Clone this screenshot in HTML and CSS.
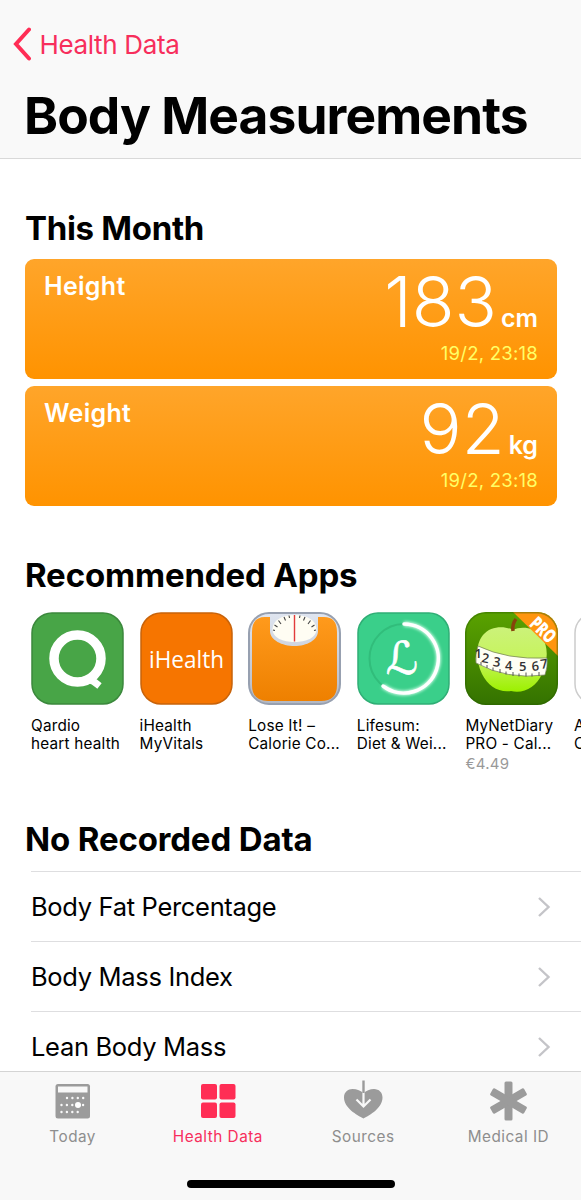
FILE: index.html
```html
<!DOCTYPE html>
<html lang="en">
<head>
  <meta charset="UTF-8">
  <meta name="viewport" content="width=device-width, initial-scale=1">
  <title>Body Measurements</title>
  <link rel="stylesheet" href="styles.css">
</head>
<body>

  <div class="screen">
    <!-- Navigation bar -->
    <header class="navbar">
      <a class="back" href="#">
        <svg width="18" height="34" viewBox="0 0 18 34"><path d="M16 2.5 3 17 16 31.500" /></svg>
        <span>Health Data</span>
      </a>
      <h1>Body Measurements</h1>
    </header>

    <main class="content">
      <!-- This month -->
      <section>
        <h2 class="this-month">This Month</h2>
        <div class="cards">
          <div class="card">
            <span class="card-label">Height</span>
            <div class="card-data">
              <div class="reading"><span class="value">183</span><span class="unit">cm</span></div>
              <div class="date">19/2, 23:18</div>
            </div>
          </div>
          <div class="card">
            <span class="card-label">Weight</span>
            <div class="card-data">
              <div class="reading"><span class="value">92</span><span class="unit">kg</span></div>
              <div class="date">19/2, 23:18</div>
            </div>
          </div>
        </div>
      </section>

      <!-- Recommended apps -->
      <section class="recommended">
        <h2>Recommended Apps</h2>
        <div class="apps">
          <div class="app">
            <svg class="app-icon" viewBox="0 0 93 93">
              <rect x="1" y="1" width="91" height="91" rx="20" fill="#48a547" stroke="#3b883c" stroke-width="1.500" />
              <circle cx="46.500" cy="46.500" r="23.500" fill="none" stroke="#fff" stroke-width="9.500" />
              <path d="M46 70.500C60 65 62 69 68.500 74" fill="none" stroke="#fff" stroke-width="7" />
            </svg>
            <div class="app-name">Qardio<br>heart health</div>
          </div>
          <div class="app">
            <svg class="app-icon" viewBox="0 0 93 93">
              <rect x="1" y="1" width="91" height="91" rx="20" fill="#f67500" stroke="#c8630a" stroke-width="1.500" />
              <text class="ihealth" x="9" y="56" textLength="75" lengthAdjust="spacingAndGlyphs">iHealth</text>
            </svg>
            <div class="app-name">iHealth<br>MyVitals</div>
          </div>
          <div class="app">
            <svg class="app-icon" viewBox="0 0 93 93">
              <defs>
                <linearGradient id="scale" x1="0" y1="0" x2="0" y2="1">
                  <stop offset="0" stop-color="#ff9a1c" />
                  <stop offset="1" stop-color="#ee8000" />
                </linearGradient>
                <linearGradient id="rim" x1="0" y1="0" x2="0" y2="1">
                  <stop offset="0" stop-color="#dfe5f0" />
                  <stop offset="1" stop-color="#b4b8c2" />
                </linearGradient>
              </defs>
              <rect x="1" y="1" width="91" height="91" rx="20" fill="url(#rim)" stroke="#97a0b0" stroke-width="2" />
              <path d="M4 20Q4 5 17 5H22V19C22 28 34 34 46.500 34S70 28 70 19V5H76Q89 5 89 20V73Q89 89 73 89H20Q4 89 4 73Z" fill="url(#scale)" />
              <path d="M24.500 17C25 8 34 3 46.500 3S68 8 68.500 17C68.500 26 58 30 46.500 30S24.500 26 24.500 17Z" fill="#fffdf3" />
              <path d="M25 18l2 .500M26.500 13l3 2M30.500 8.500l2.500 3.500M36 5l1.500 3.500M41 3.500l.500 2.500M52 3.500l-.500 2.500M57 5l-1.500 3.500M62.500 8.500l-2.500 3.500M66.500 13l-3 2M68 18l-2 .500" stroke="#444" stroke-width="1.100" />
              <path d="M46.500 3V29.500" stroke="#e23b3b" stroke-width="1.400" />
            </svg>
            <div class="app-name">Lose It! –<br>Calorie Co...</div>
          </div>
          <div class="app">
            <svg class="app-icon" viewBox="0 0 93 93">
              <defs>
                <filter id="glow" x="-20%" y="-20%" width="140%" height="140%"><feGaussianBlur stdDeviation="1.800" /></filter>
              </defs>
              <rect x="1" y="1" width="91" height="91" rx="20" fill="#3acf8a" stroke="#2fae75" stroke-width="1.500" />
              <circle cx="47" cy="46.500" r="34.500" fill="none" stroke="#31bd7b" stroke-width="2" />
              <path d="M47 12A34.500 34.500 0 1 1 26 74" fill="none" stroke="#d9ffec" stroke-width="5" filter="url(#glow)" />
              <path d="M47 12A34.500 34.500 0 1 1 26 74" fill="none" stroke="#fff" stroke-width="3.500" stroke-linecap="round" />
              <text class="lifesum" x="45" y="62" text-anchor="middle">ℒ</text>
            </svg>
            <div class="app-name">Lifesum:<br>Diet &amp; Wei...</div>
          </div>
          <div class="app">
            <svg class="app-icon" viewBox="0 0 93 93">
              <defs>
                <linearGradient id="leaf" x1="0" y1="0" x2="0" y2="1">
                  <stop offset="0" stop-color="#5aa200" />
                  <stop offset="1" stop-color="#347200" />
                </linearGradient>
                <linearGradient id="apple" x1="0" y1="0" x2="0" y2="1">
                  <stop offset="0" stop-color="#ccf27a" />
                  <stop offset="0.500" stop-color="#c6f45c" />
                  <stop offset="1" stop-color="#9cf000" />
                </linearGradient>
                <clipPath id="tile"><rect width="93" height="93" rx="21" /></clipPath>
              </defs>
              <g clip-path="url(#tile)">
                <rect width="93" height="93" fill="url(#leaf)" />
                <path d="M48 18C41 14 26 13 18 23C10 33 11 49 17 62C23 74 34 81 46 79C59 82 71 75 77 62C83 49 84 34 76 24C69 15 56 14 48 18Z" fill="url(#apple)" />
                <path d="M48 19Q47 12 51 7" fill="none" stroke="#87430c" stroke-width="3.500" />
                <path d="M13 34Q42 48 82 46Q83 55 80 63Q42 68 11 51Q10 42 13 34Z" fill="#fffff4" stroke="#6d7950" stroke-width="0.700" />
                <path d="M16 53v-3M22 56v-3M28 58.500v-3M35 61v-4M41 62.500v-3M48 64v-4M54 64.500v-3M61 64.500v-4M67 64.500v-3M74 64v-4" stroke="#555" stroke-width="1" />
                <g class="tape">
                  <text x="9.500" y="46">1</text>
                  <text x="16" y="50" transform="rotate(10 16 50)">2</text>
                  <text x="27.500" y="54" transform="rotate(8 27.500 54)">3</text>
                  <text x="40" y="58">4</text>
                  <text x="54" y="59">5</text>
                  <text x="67" y="59" transform="rotate(-5 67 59)">6</text>
                  <text x="76" y="57" transform="rotate(-8 76 57)">7</text>
                </g>
                <path d="M48 0H93V44Z" fill="#ff950f" />
                <text class="pro" transform="translate(63.500 13) rotate(44)" textLength="28" lengthAdjust="spacingAndGlyphs">PRO</text>
                <rect x="0.700" y="0.700" width="91.600" height="91.600" rx="20.500" fill="none" stroke="#285c00" stroke-opacity="0.400" stroke-width="1.500" />
              </g>
            </svg>
            <div class="app-name">MyNetDiary<br>PRO - Cal...</div>
            <div class="price">€4.49</div>
          </div>
          <div class="app">
            <svg class="app-icon" viewBox="0 0 93 93">
              <rect x="1" y="1" width="91" height="91" rx="20" fill="#fff" stroke="#ccc" stroke-width="1.500" />
            </svg>
            <div class="app-name">A<br>C</div>
          </div>
        </div>
      </section>

      <!-- No recorded data -->
      <section class="no-data">
        <h2>No Recorded Data</h2>
        <ul class="list">
          <li><span>Body Fat Percentage</span><svg width="14" height="22" viewBox="0 0 14 22"><path d="M2 2 11.500 11 2 20" /></svg></li>
          <li><span>Body Mass Index</span><svg width="14" height="22" viewBox="0 0 14 22"><path d="M2 2 11.500 11 2 20" /></svg></li>
          <li><span>Lean Body Mass</span><svg width="14" height="22" viewBox="0 0 14 22"><path d="M2 2 11.500 11 2 20" /></svg></li>
        </ul>
      </section>
    </main>

    <!-- Tab bar -->
    <footer class="footer">
      <nav class="tabs">
        <a class="tab" href="#">
          <svg width="40" height="42" viewBox="0 0 40 42">
            <rect x="2.500" y="4" width="34.500" height="34.500" rx="2.500" fill="#9b9b9b" />
            <rect x="5" y="6.500" width="29.500" height="6" fill="#f8f8f8" />
            <path d="M14 18h16.500M8.500 25h22M8.500 32h16.500" stroke="#f8f8f8" stroke-width="2.400" stroke-linecap="round" stroke-dasharray="0 5.400" />
            <circle cx="25" cy="25" r="3" fill="#fff" />
          </svg>
          <span>Today</span>
        </a>
        <a class="tab active" href="#">
          <svg width="40" height="42" viewBox="0 0 40 42" fill="#ff2d55">
            <rect x="3" y="4" width="16" height="15.500" rx="2" />
            <rect x="21.500" y="4" width="16" height="15.500" rx="2" />
            <rect x="3" y="22.500" width="16" height="15.500" rx="2" />
            <rect x="21.500" y="22.500" width="16" height="15.500" rx="2" />
          </svg>
          <span>Health Data</span>
        </a>
        <a class="tab" href="#">
          <svg width="40" height="42" viewBox="0 0 40 42">
            <path d="M20.500 38.500C14 35 1 28 1 17.500C1 12 5 9 9.500 9C14 9 18 10.500 20.500 13.500C23 10.500 27 9 31 9C36 9 39.500 12.500 39.500 17.500C39.500 28 27 35 20.500 38.500Z" fill="#9b9b9b" />
            <path d="M20.500 12V27M13.500 19.500 20.500 26.500 27.500 19.500" fill="none" stroke="#f8f8f8" stroke-width="2.200" />
            <path d="M20.500 0.500V13" stroke="#9b9b9b" stroke-width="2.400" />
          </svg>
          <span>Sources</span>
        </a>
        <a class="tab" href="#">
          <svg width="40" height="42" viewBox="0 0 40 42" fill="#9b9b9b">
            <rect x="16.500" y="1.500" width="8" height="39" rx="1.500" />
            <rect x="16.500" y="1.500" width="8" height="39" rx="1.500" transform="rotate(60 20.500 21)" />
            <rect x="16.500" y="1.500" width="8" height="39" rx="1.500" transform="rotate(-60 20.500 21)" />
          </svg>
          <span>Medical ID</span>
        </a>
      </nav>
      <div class="home-indicator"></div>
    </footer>
  </div>

</body>
</html>
```
FILE: styles.css
```css
* {
  box-sizing: border-box;
}

body {
  margin: 0;
  background: #fff;
  color: #000;
  font-family: Inter, "Liberation Sans", sans-serif;
}

a {
  color: inherit;
  text-decoration: none;
}

svg {
  display: block;
  flex: none;
}

.screen {
  display: flex;
  flex-direction: column;
  width: 581px;
  height: 1200px;
  overflow: hidden;
}

/* Navigation bar */
.navbar {
  flex: none;
  height: 159px;
  background: #f9f9f9;
  border-bottom: 1px solid #d9d9d9;
}

.back {
  display: flex;
  align-items: center;
  gap: 8.5px;
  height: 88px;
  padding-left: 13px;
  color: #f72e5c;
  font-size: 26px;
  letter-spacing: -0.35px;
}

.back path {
  fill: none;
  stroke: #ff2d55;
  stroke-width: 4;
  stroke-linecap: round;
}

h1 {
  margin: -1px 0 0;
  padding-left: 24px;
  font-size: 51.5px;
  line-height: 57px;
  font-weight: 700;
  letter-spacing: -0.92px;
  white-space: nowrap;
}

h2 {
  margin: 0;
  padding-left: 25px;
  font-size: 33px;
  line-height: 40px;
  font-weight: 700;
  letter-spacing: -0.15px;
  white-space: nowrap;
}

.this-month {
  margin-top: -1px;
  padding-bottom: 1px;
  letter-spacing: -0.3px;
}

.content {
  flex: 1;
  min-height: 0;
  padding-top: 50px;
  overflow: hidden;
}

/* Measurement cards */
.cards {
  display: flex;
  flex-direction: column;
  gap: 6.5px;
  padding: 9.5px 24px 0 25px;
}

.card {
  display: flex;
  justify-content: space-between;
  height: 120.5px;
  padding: 8px 19px 0;
  border-radius: 9px;
  background: linear-gradient(#ffa52a, #ff9300);
  color: #fff;
}

.card-label {
  font-size: 25px;
  line-height: 39px;
  font-weight: 600;
  letter-spacing: 0.3px;
}

.card-data {
  text-align: right;
}

.reading {
  display: flex;
  align-items: baseline;
  justify-content: flex-end;
  gap: 4px;
  height: 70px;
  line-height: 69px;
}

.value {
  font-size: 70px;
  font-weight: 300;
}

.unit {
  font-size: 25px;
  font-weight: 600;
}

.date {
  margin-top: 6px;
  color: #ffff66;
  font-size: 18.5px;
  line-height: 20px;
  letter-spacing: 0.25px;
}

/* Recommended apps */
.recommended {
  padding-top: 49px;
}

.apps {
  display: flex;
  gap: 15.6px;
  height: 208px;
  padding: 17px 0 0 31px;
}

.app {
  flex: none;
  width: 93px;
  font-size: 15.3px;
  white-space: nowrap;
}

.app-icon {
  width: 93px;
  height: 93px;
}

.app-name {
  margin-top: 11.5px;
  line-height: 18px;
  letter-spacing: 0.2px;
}

.price {
  margin-top: 1px;
  color: #999;
  font-size: 15px;
  line-height: 20px;
  letter-spacing: 0.3px;
}

.ihealth {
  fill: #fff;
  font-family: "Open Sans", sans-serif;
  font-size: 24px;
}

.lifesum {
  fill: #fff;
  stroke: #fff;
  stroke-width: 0.6px;
  font-family: "DejaVu Sans", sans-serif;
  font-size: 45px;
}

.tape {
  fill: #333;
  font-family: "Open Sans", sans-serif;
  font-size: 13px;
  font-weight: 600;
}

.pro {
  fill: #fff;
  font-family: "Open Sans", sans-serif;
  font-size: 19px;
  font-weight: 800;
}

/* No recorded data */
.no-data {
  padding-top: 16px;
}

.list {
  margin: 12px 0 0;
  padding: 0 0 0 31px;
  list-style: none;
}

.list li {
  display: flex;
  align-items: center;
  justify-content: space-between;
  height: 70px;
  padding-right: 30px;
  border-top: 1px solid #dedee0;
  font-size: 25.5px;
  letter-spacing: -0.32px;
}

.list path {
  fill: none;
  stroke: #c4c4c8;
  stroke-width: 2.4;
}

/* Tab bar */
.footer {
  flex: none;
  height: 129px;
  border-top: 1px solid #d4d4d4;
  background: #f8f8f8;
}

.tabs {
  display: grid;
  grid-template-columns: repeat(4, 1fr);
  height: 108px;
  padding-top: 8px;
}

.tab {
  display: flex;
  flex-direction: column;
  align-items: center;
  gap: 5px;
  color: #8e8e8e;
  font-size: 15.3px;
  line-height: 20px;
  letter-spacing: 0.5px;
}

.active {
  color: #f72e5c;
}

.home-indicator {
  width: 208px;
  height: 8px;
  margin: 0 auto;
  border-radius: 4px;
  background: #000;
}
```
